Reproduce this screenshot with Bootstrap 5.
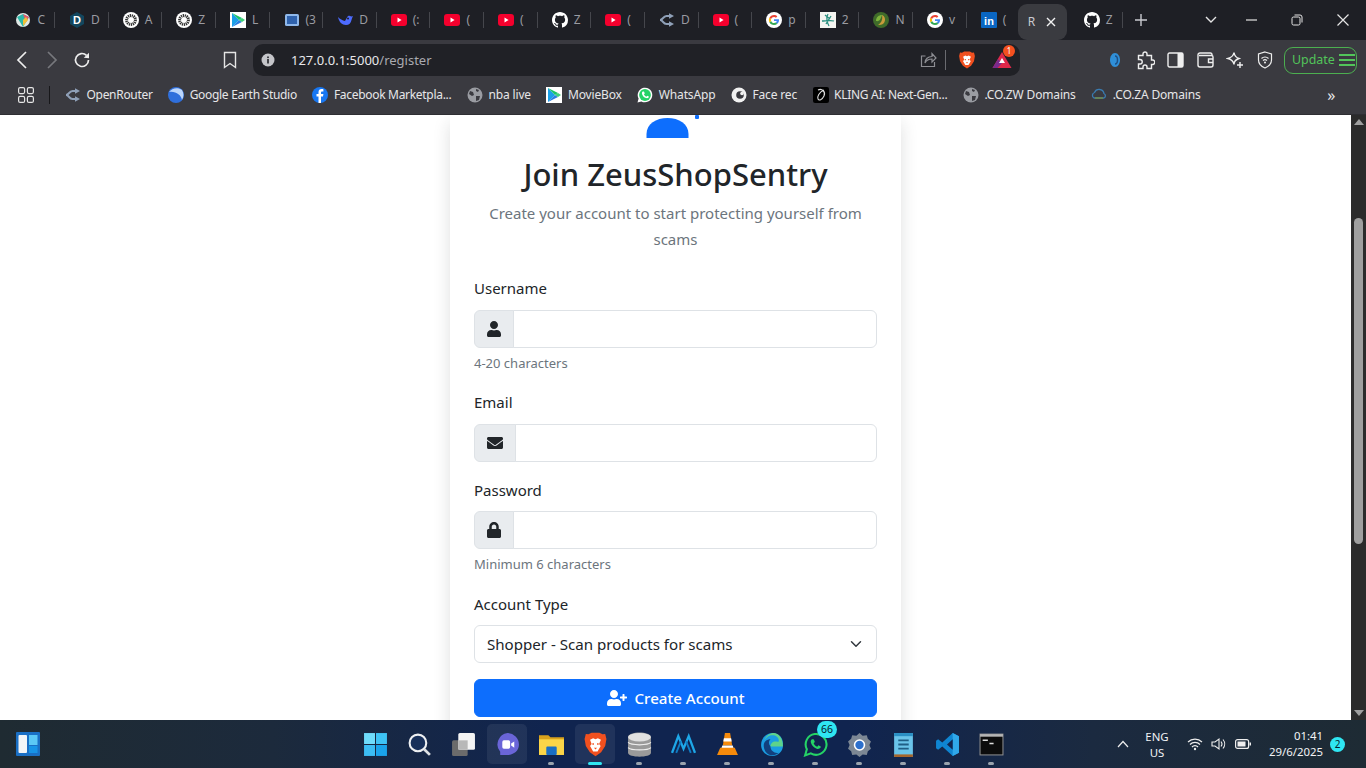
<!DOCTYPE html>
<html>
<head>
<title>Register - ZeusShopSentry</title>
<link rel="stylesheet" href="https://cdn.jsdelivr.net/npm/bootstrap@5.3.0/dist/css/bootstrap.min.css">
<style>
html, body { height: 100%; overflow: hidden; }
body { font-family: "Noto Sans", "Open Sans", sans-serif; background: #fff; }
.screen { height: 768px; width: 1366px; }

/* tab strip */
.tabstrip { height: 40px; background: #1e1f25; color: #9a9ba1; font-size: 12px; padding-left: 1.4px; }
.tb { width: 53.64px; height: 40px; flex: none; padding-left: 14px; position: relative; }
.tb .ltr { margin-left: 6px; white-space: nowrap; line-height: 1; }
.tb::after { content: ""; position: absolute; right: 0; top: 12px; height: 16px; width: 1px; background: #45464c; }
.tb.nosep::after { display: none; }
.tb-active { width: 49px; height: 36px; margin: 4px 3px 0 -2.6px; background: #3a3b40; border-radius: 9px; flex: none; padding-left: 10px; color: #c9cad0; }
.tb-active svg { margin-right: 11px; }
.tabstrip svg.fav { width: 16px; height: 16px; flex: none; }
.newtab { margin-left: 12px; }
.winbtn { width: 46px; flex: none; }
.winbtn-first { padding-left: 12px; }

/* toolbar */
.toolbar { height: 40px; background: #3a3a40; padding-left: 7px; }
.slot { width: 30px; height: 30px; flex: none; }
.slot-mark { margin-left: 118px; }
.urlbar { width: 767px; height: 32px; background: #202126; border-radius: 10px; margin-left: 8px; margin-right: 80px; flex: none; font-size: 13px; padding-left: 8px; }
.urlbar .host { color: #e8e8ea; }
.urlbar .path { color: #a9aab0; }
.url-text { margin-left: 16px; padding-top: 1px; }
.urlbar-sep { width: 1px; height: 20px; background: #6a6b70; }
.bat-count { top: -6px; left: 11px; width: 12px; height: 12px; background: #f4501f; color: #fff; font-size: 8px; line-height: 12px; }
.upd { width: 73px; height: 27px; border: 1px solid #4caf50; border-radius: 9px; color: #52c45a; font-size: 12.4px; margin-left: 4px; flex: none; padding-left: 7px; }

/* bookmarks */
.bookbar { height: 35px; background: #3a3a40; color: #e6e6e8; font-size: 12px; letter-spacing: -.3px; padding: 0 0 4px 18px; border-bottom: 1px solid #2e2e33; white-space: nowrap; }
.bk { gap: 5.5px; flex: none; margin-right: 15.5px; }
.bk-loose { letter-spacing: -.15px; }
.bk svg { width: 16px; height: 16px; flex: none; }
.bookbar-sep { width: 1px; height: 18px; background: #17171a; margin: 0 15px; flex: none; }
.bk-more { margin-left: auto; margin-right: 31px; font-size: 16px; }

/* page */
.viewport { height: 605px; overflow: hidden; background: #fff; }
.pagearea { width: 1351px; flex: none; }
.reg-card { width: 451px; height: 640px; border-radius: 0; color: #212529; }
.reg-card .card-body { padding: 0 24px; }
.logo-clip { height: 23px; margin-bottom: 17px; display: block; margin-left: auto; margin-right: auto; width: 80px; }
.reg-title { font-size: 31px; font-weight: 500; line-height: 38.4px; margin-bottom: 8px; }
.reg-sub { color: #6c757d; font-size: 15px; line-height: 25.6px; margin-bottom: 23.6px; }
.reg-label { font-size: 15px; line-height: 25.6px; margin-bottom: 8px; display: block; }
.reg-hint { font-size: 13px; color: #6c757d; margin-top: 4px; line-height: 22.4px; }
.reg-card .form-control, .reg-card .form-select { height: 38px; font-size: 15.1px; }
.reg-card .input-group-text { padding: 0 12px; background: #e9ecef; }
.fi { height: 16px; fill: #212529; display: block; }
.reg-btn { height: 38px; font-weight: 500; font-size: 15.1px; background: #0d6efd; padding: 0; }
.reg-btn svg { height: 16px; fill: #fff; }

/* scrollbar */
.vbar { width: 15px; flex: none; background: #2b2b2b; position: relative; }
.vthumb { position: absolute; left: 3px; right: 3px; top: 103px; height: 326px; background: #9f9f9f; border-radius: 5px; }
.varr { position: absolute; left: 3px; width: 0; height: 0; border-left: 5px solid transparent; border-right: 5px solid transparent; }
.varr.up { top: 4px; border-bottom: 6px solid #9f9f9f; }
.varr.dn { bottom: 4px; border-top: 6px solid #9f9f9f; }

/* taskbar */
.taskbar { height: 48px; background: linear-gradient(90deg, #1f2b32 0, #1c2a3c 20%, #10244f 40%, #10244f 62%, #1b2a40 80%, #1e2b34 100%); color: #f2f3f5; position: relative; padding-left: 353px; }
.tk { width: 44px; height: 48px; flex: none; position: relative; }
.tk svg { width: 25px; height: 25px; position: relative; }
.tk.on::before { content: ""; position: absolute; left: 2px; right: 2px; top: 4px; bottom: 4px; background: rgba(255,255,255,.07); border-radius: 5px; }
.tk.run::after { content: ""; position: absolute; left: 19px; bottom: 3px; width: 6px; height: 3px; border-radius: 2px; background: #9aa3ad; }
.tk.cur::after { left: 15px; width: 14px; background: #2fe6f2; }
.tk-badge { position: absolute; right: 0; top: 1px; min-width: 20px; height: 17px; padding: 0 3px; background: #2fe6f2; color: #07202b; border-radius: 9px; font-size: 10.5px; text-align: center; line-height: 17px; }
.widg { position: absolute; left: 16px; top: 12px; width: 24px; height: 24px; }
.tray { position: absolute; right: 0; top: 0; height: 48px; padding-right: 21px; font-size: 11.4px; }
.tray svg { flex: none; }
.tray-up { margin-right: 5px; }
.lang { width: 42px; line-height: 16px; text-align: center; margin: 2px 9px 0 2px; }
.clock { line-height: 16px; text-align: right; width: 70px; margin-left: 2px; }
.notif { width: 15px; height: 15px; border-radius: 50%; background: #2fe6f2; color: #07202b; font-size: 10px; line-height: 15px; text-align: center; margin-left: 7px; }
</style>
</head>
<body>
<svg width="0" height="0" class="d-block position-absolute">
  <defs>
    <symbol id="i-oai" viewBox="0 0 16 16"><circle cx="8" cy="8" r="8" fill="#fff"/><circle cx="8" cy="8" r="4.4" fill="none" stroke="#333" stroke-width="3" stroke-dasharray="1.2 .7"/><circle cx="8" cy="8" r="1.4" fill="#fff"/></symbol>
    <symbol id="i-yt" viewBox="0 0 16 16"><rect y="2" width="16" height="12" rx="3" fill="#f5002d"/><path d="M6.5 5.6 10.6 8l-4.1 2.4z" fill="#fff"/></symbol>
    <symbol id="i-gh" viewBox="0 0 16 16"><path fill="#fff" d="M8 0C3.58 0 0 3.58 0 8c0 3.54 2.29 6.53 5.47 7.59.4.07.55-.17.55-.38 0-.19-.01-.82-.01-1.49-2.01.37-2.53-.49-2.69-.94-.09-.23-.48-.94-.82-1.13-.28-.15-.68-.52-.01-.53.63-.01 1.08.58 1.23.82.72 1.21 1.87.87 2.33.66.07-.52.28-.87.51-1.07-1.78-.2-3.64-.89-3.64-3.95 0-.87.31-1.59.82-2.15-.08-.2-.36-1.02.08-2.12 0 0 .67-.21 2.2.82.64-.18 1.32-.27 2-.27.68 0 1.36.09 2 .27 1.53-1.04 2.2-.82 2.2-.82.44 1.1.16 1.92.08 2.12.51.56.82 1.27.82 2.15 0 3.07-1.87 3.75-3.65 3.95.29.25.54.73.54 1.48 0 1.07-.01 1.93-.01 2.2 0 .21.15.46.55.38A8.012 8.012 0 0 0 16 8c0-4.42-3.58-8-8-8z"/></symbol>
    <symbol id="i-goog" viewBox="0 0 16 16"><circle cx="8" cy="8" r="8" fill="#fff"/><path d="M13 8.2c0-.4 0-.7-.1-1H8v1.9h2.8c-.1.6-.5 1.2-1 1.5l1.6 1.2c.9-.9 1.6-2.1 1.6-3.6z" fill="#4285f4"/><path d="M8 13c1.4 0 2.5-.4 3.4-1.2l-1.6-1.2c-.5.3-1 .5-1.8.5-1.3 0-2.5-.9-2.9-2.1L3.4 10.2C4.2 11.9 6 13 8 13z" fill="#34a853"/><path d="M5.1 9c-.2-.6-.2-1.3 0-2L3.4 5.8c-.7 1.4-.7 3 0 4.4z" fill="#fbbc05"/><path d="M8 5c.8 0 1.4.3 1.9.8l1.4-1.4C10.5 3.5 9.3 3 8 3 6 3 4.2 4.1 3.4 5.8L5.1 7C5.5 5.8 6.7 5 8 5z" fill="#ea4335"/></symbol>
    <symbol id="i-play" viewBox="0 0 16 16"><rect width="16" height="16" fill="#fff"/><path d="M2 1 9 8 2 15z" fill="#1aa0e8"/><path d="M2 1l7 7 3-2z" fill="#1cc46a"/><path d="M2 15l7-7 3 2z" fill="#2a7de0"/><path d="M9 8l3-2 3 2-3 2z" fill="#3ed07a"/></symbol>
    <symbol id="i-or" viewBox="0 0 16 16"><path d="M1 8c3 0 3-4 6.5-4h3M1 8c3 0 3 4 6.5 4h3" fill="none" stroke="#8fa0b8" stroke-width="2.2"/><path d="M10 1.2 15 4l-5 2.8zM10 9.2l5 2.8-5 2.8z" fill="#8fa0b8"/></symbol>
    <symbol id="i-globe" viewBox="0 0 16 16"><circle cx="8" cy="8" r="7.5" fill="#9a9ca2"/><path d="M3 4l3 1 1 3-2 1-3-2zM9 2l3 1-1 2-2-1zM9 9l4 0-1 4-3 1z" fill="#3a3a40"/></symbol>
    <symbol id="i-wa" viewBox="0 0 16 16"><path d="M.5 15.5 1.6 11.6A7.3 7.3 0 1 1 4.4 14.4z" fill="#fff"/><circle cx="8" cy="8" r="5.9" fill="#25d366"/><path d="M5.7 4.6c-.6.5-1 1.4-.6 2.6.7 1.9 2 3.2 3.9 3.9 1.2.4 2.1 0 2.6-.6.3-.4.3-.9.2-1l-1.6-.8-.8 1c-1.1-.4-2-1.3-2.5-2.5l.9-.8-.7-1.7c-.1-.1-.8-.2-1.4-.1z" fill="#fff"/></symbol>
    <symbol id="i-moon" viewBox="0 0 16 16"><circle cx="8" cy="8" r="7.5" fill="#f1f1f1"/><circle cx="9" cy="8" r="3.8" fill="#3a3a40"/><circle cx="11" cy="6.5" r="1.8" fill="#f1f1f1"/></symbol>
    <symbol id="i-brave" viewBox="0 0 16 16"><path d="M3.5 1.5 5.5.5h5l2 1 1.7-.2.8 3.2-.8 4.5-2.6 4L8 15.5 4.4 13 1.8 9 1 4.5 1.8 1.3z" fill="#f1501f"/><path d="M4.5 5 6.5 4 8 4.6 9.5 4l2 1-1.2 2.6 1 1.4-2 3.4H6.5l-2-3.4 1-1.4z" fill="#fff"/><path d="M6 7.2h1v1H6zM9 7.2h1v1H9zM7 10h2l-1 1.2z" fill="#f1501f"/></symbol>
    <symbol id="i-lead" viewBox="0 0 16 16"><path d="M8 1c3 0 5 3.5 5 7s-2 7-5 7-5-3.5-5-7 2-7 5-7z" fill="#2f8fd8"/><path d="M8 4c1.5 0 2.5 2 2.5 4S9.5 12 8 12" fill="none" stroke="#1d4f86" stroke-width="1.5"/></symbol>
  </defs>
</svg>

<div class="screen d-flex flex-column">

  <!-- tabs -->
  <div class="tabstrip d-flex align-items-center">
    <div class="tb d-flex align-items-center"><svg class="fav" viewBox="0 0 16 16"><circle cx="8" cy="8" r="7" fill="#dfe8e6"/><path d="M2 5l6-3 6 3-6 10z" fill="#2db7a8"/><path d="M8 2l6 3-3 5z" fill="#e8556a"/><path d="M8 8l3-3 2 3-5 6z" fill="#f2c037"/></svg><span class="ltr">C</span></div>
    <div class="tb d-flex align-items-center"><svg class="fav" viewBox="0 0 16 16"><path d="M8 0l7 4v8l-7 4-7-4V4z" fill="#12465e"/><text x="8" y="12" font-size="11" font-weight="700" fill="#fff" text-anchor="middle" font-family="Liberation Sans">D</text></svg><span class="ltr">D</span></div>
    <div class="tb d-flex align-items-center"><svg class="fav"><use href="#i-oai"/></svg><span class="ltr">A</span></div>
    <div class="tb d-flex align-items-center"><svg class="fav"><use href="#i-oai"/></svg><span class="ltr">Z</span></div>
    <div class="tb d-flex align-items-center"><svg class="fav"><use href="#i-play"/></svg><span class="ltr">L</span></div>
    <div class="tb d-flex align-items-center"><svg class="fav" viewBox="0 0 16 16"><rect x="1" y="2" width="14" height="12" rx="1.5" fill="#8fb8ea"/><rect x="3" y="4" width="10" height="8" fill="#2f62ad"/></svg><span class="ltr">(3</span></div>
    <div class="tb d-flex align-items-center"><svg class="fav" viewBox="0 0 16 16"><path d="M1 5c1 5 4 8 8 8 3 0 5-2 5.5-5 .5-2 1-3 1.5-4-1 .5-2 .5-3 0-1-.5-2.5 0-3 1.5L8 9C5.5 8.5 3 7 1 5z" fill="#4d6bfe"/><circle cx="11" cy="6.5" r="1" fill="#1e1f25"/></svg><span class="ltr">D</span></div>
    <div class="tb d-flex align-items-center"><svg class="fav"><use href="#i-yt"/></svg><span class="ltr">(:</span></div>
    <div class="tb d-flex align-items-center"><svg class="fav"><use href="#i-yt"/></svg><span class="ltr">(</span></div>
    <div class="tb d-flex align-items-center"><svg class="fav"><use href="#i-yt"/></svg><span class="ltr">(</span></div>
    <div class="tb d-flex align-items-center"><svg class="fav"><use href="#i-gh"/></svg><span class="ltr">Z</span></div>
    <div class="tb d-flex align-items-center"><svg class="fav"><use href="#i-yt"/></svg><span class="ltr">(</span></div>
    <div class="tb d-flex align-items-center"><svg class="fav"><use href="#i-or"/></svg><span class="ltr">D</span></div>
    <div class="tb d-flex align-items-center"><svg class="fav"><use href="#i-yt"/></svg><span class="ltr">(</span></div>
    <div class="tb d-flex align-items-center"><svg class="fav"><use href="#i-goog"/></svg><span class="ltr">p</span></div>
    <div class="tb d-flex align-items-center"><svg class="fav" viewBox="0 0 16 16"><rect width="16" height="16" fill="#f4f4f0"/><path d="M2 9c3 0 9-1 12 0M8 2c-2 3-1 9 1 12M5 3l5 4M11 4 6 12" fill="none" stroke="#2a8f80" stroke-width="1.3"/></svg><span class="ltr">2</span></div>
    <div class="tb d-flex align-items-center"><svg class="fav" viewBox="0 0 16 16"><circle cx="8" cy="8" r="8" fill="#3f6b2a"/><path d="M3 9c0-4 3-6 6-6-1 3-2 7-6 6z" fill="#7db33c"/><path d="M9 3c3 1 4 5 2 8-2 2-4 2-6 2 3-2 5-5 4-10z" fill="#c99a3b"/></svg><span class="ltr">N</span></div>
    <div class="tb d-flex align-items-center"><svg class="fav"><use href="#i-goog"/></svg><span class="ltr">v</span></div>
    <div class="tb nosep d-flex align-items-center"><svg class="fav" viewBox="0 0 16 16"><rect width="16" height="16" rx="1" fill="#0a66c2"/><text x="8" y="12.5" font-size="11" font-weight="700" fill="#fff" text-anchor="middle" font-family="Liberation Sans">in</text></svg><span class="ltr">(</span></div>
    <div class="tb-active d-flex align-items-center"><span>R</span><svg class="ms-auto" width="10" height="10" viewBox="0 0 10 10"><path d="M1 1l8 8M9 1 1 9" stroke="#f2f2f2" stroke-width="1.4"/></svg></div>
    <div class="tb d-flex align-items-center"><svg class="fav"><use href="#i-gh"/></svg><span class="ltr">Z</span></div>
    <svg class="newtab" width="12" height="12" viewBox="0 0 12 12"><path d="M6 0v12M0 6h12" stroke="#c9cad0" stroke-width="1.4"/></svg>
    <div class="ms-auto d-flex align-items-center">
      <div class="winbtn winbtn-first d-flex justify-content-center"><svg width="12" height="8" viewBox="0 0 12 8"><path d="M1 1l5 5 5-5" fill="none" stroke="#e5e5e5" stroke-width="1.4"/></svg></div>
      <div class="winbtn d-flex justify-content-center"><svg width="11" height="2" viewBox="0 0 11 2"><path d="M0 1h11" stroke="#e5e5e5" stroke-width="1.2"/></svg></div>
      <div class="winbtn d-flex justify-content-center"><svg width="12" height="12" viewBox="0 0 12 12"><rect x="1" y="3" width="8" height="8" rx="1.5" fill="none" stroke="#e5e5e5"/><path d="M3.5 1H9a2 2 0 0 1 2 2v5.5" fill="none" stroke="#e5e5e5"/></svg></div>
      <div class="winbtn d-flex justify-content-center"><svg width="12" height="12" viewBox="0 0 12 12"><path d="M.5.5l11 11M11.5.5l-11 11" stroke="#e5e5e5" stroke-width="1.2"/></svg></div>
    </div>
  </div>

  <!-- toolbar -->
  <div class="toolbar d-flex align-items-center">
    <div class="slot d-flex align-items-center justify-content-center"><svg width="12" height="18" viewBox="0 0 12 18"><path d="M10 1 2 9l8 8" fill="none" stroke="#eee" stroke-width="1.7"/></svg></div>
    <div class="slot d-flex align-items-center justify-content-center"><svg width="12" height="18" viewBox="0 0 12 18"><path d="M2 1l8 8-8 8" fill="none" stroke="#77787d" stroke-width="1.7"/></svg></div>
    <div class="slot d-flex align-items-center justify-content-center"><svg width="18" height="18" viewBox="0 0 18 18"><path d="M15.5 9a6.5 6.5 0 1 1-2-4.7" fill="none" stroke="#eee" stroke-width="1.7"/><path d="M10.8 6.8 16 7.2V1.8z" fill="#eee"/></svg></div>
    <div class="slot slot-mark d-flex align-items-center justify-content-center"><svg width="14" height="18" viewBox="0 0 14 18"><path d="M1.5 1.5h11v15L7 12.5l-5.500 4z" fill="none" stroke="#e5e5e5" stroke-width="1.4"/></svg></div>
    <div class="urlbar d-flex align-items-center">
      <svg width="14" height="14" viewBox="0 0 14 14"><circle cx="7" cy="7" r="6.5" fill="#c4c5c9"/><rect x="6.2" y="6" width="1.6" height="4.5" fill="#202126"/><rect x="6.2" y="3.5" width="1.6" height="1.6" fill="#202126"/></svg>
      <span class="url-text"><span class="host">127.0.0.1:5000</span><span class="path">/register</span></span>
      <div class="ms-auto d-flex align-items-center">
        <svg width="18" height="18" viewBox="0 0 18 18"><path d="M15.5 11v4.5h-13V5h4" fill="none" stroke="#8d8e93" stroke-width="1.2"/><path d="M6 12c0-4 3-6.5 7-6.5V2.5L17 7l-4 4V8c-3 0-5.5 1-7 4z" fill="none" stroke="#8d8e93" stroke-width="1.2"/></svg>
        <span class="urlbar-sep d-block mx-2"></span>
        <svg width="18" height="20" class="ms-1"><use href="#i-brave"/></svg>
        <div class="position-relative ms-3 me-2">
          <svg width="20" height="18" viewBox="0 0 20 18" class="d-block"><path d="M10 1 19.5 17H.5z" fill="#e0284a"/><path d="M.5 17 6 8l4 4-4.5 5z" fill="#7a2a8c"/><path d="M10 7l3 5H7z" fill="#fff"/></svg>
          <span class="bat-count position-absolute rounded-circle text-center">1</span>
        </div>
      </div>
    </div>
    <div class="slot d-flex align-items-center justify-content-center"><svg width="16" height="18"><use href="#i-lead"/></svg></div>
    <div class="slot d-flex align-items-center justify-content-center"><svg width="19" height="19" viewBox="0 0 19 19"><path d="M7 3a2 2 0 0 1 4 0v1.5h4.5V9H17a2.3 2.3 0 0 1 0 4.5h-1.5v4H11V16a2 2 0 0 0-4 0v1.5H2.5V13H4a2.2 2.2 0 0 0 0-4.5H2.5v-4H7z" fill="none" stroke="#eee" stroke-width="1.4"/></svg></div>
    <div class="slot d-flex align-items-center justify-content-center"><svg width="17" height="16" viewBox="0 0 17 16"><rect x="1" y="1" width="15" height="14" rx="1.5" fill="none" stroke="#eee" stroke-width="1.4"/><rect x="10.5" y="1" width="5.5" height="14" fill="#eee"/></svg></div>
    <div class="slot d-flex align-items-center justify-content-center"><svg width="17" height="16" viewBox="0 0 17 16"><path d="M15 3.5V2.5A1.5 1.5 0 0 0 13.500 1H3A2 2 0 0 0 1 3v10a2 2 0 0 0 2 2h11a2 2 0 0 0 2-2V5a1.5 1.5 0 0 0-1.5-1.5H2" fill="none" stroke="#eee" stroke-width="1.4"/><path d="M16 7h-4.5v3.5H16" fill="none" stroke="#eee" stroke-width="1.4"/></svg></div>
    <div class="slot d-flex align-items-center justify-content-center"><svg width="18" height="18" viewBox="0 0 18 18"><path d="M8 1.5c.5 3 2 5 5 6-3 1-5 3-5 6-.5-3-2.5-5-6-6 3.5-1 5.5-3 6-6z" fill="none" stroke="#eee" stroke-width="1.4"/><path d="M14 11v6M11 14h6" stroke="#eee" stroke-width="1.4"/></svg></div>
    <div class="slot d-flex align-items-center justify-content-center"><svg width="16" height="18" viewBox="0 0 16 18"><path d="M8 1l6.5 2v6c0 4-3 6.5-6.5 8-3.5-1.500-6.5-4-6.5-8V3z" fill="none" stroke="#eee" stroke-width="1.2"/><path d="M4.5 7.5c2-1.800 5-1.800 7 0M6 9.500c1.200-1 2.800-1 4 0" fill="none" stroke="#eee" stroke-width="1.2"/><circle cx="8" cy="11.5" r="1" fill="#eee"/></svg></div>
    <div class="upd d-flex align-items-center"><span>Update</span><svg class="ms-1" width="16" height="14" viewBox="0 0 16 14"><path d="M0 2h16M0 7h16M0 12h16" stroke="#52c45a" stroke-width="1.8"/></svg></div>
  </div>

  <!-- bookmarks -->
  <div class="bookbar d-flex align-items-center">
    <svg width="16" height="16" viewBox="0 0 16 16"><g fill="none" stroke="#e5e5e5" stroke-width="1.2"><rect x=".6" y=".6" width="6" height="6" rx="1.5"/><rect x="9.4" y=".6" width="6" height="6" rx="1.5"/><rect x=".6" y="9.4" width="6" height="6" rx="1.5"/><rect x="9.4" y="9.4" width="6" height="6" rx="1.5"/></g></svg>
    <span class="bookbar-sep"></span>
    <div class="bk d-flex align-items-center"><svg><use href="#i-or"/></svg><span>OpenRouter</span></div>
    <div class="bk d-flex align-items-center"><svg viewBox="0 0 16 16"><circle cx="8" cy="8" r="8" fill="#2f6fdc"/><path d="M1 5c3-4 9-5 13-2 2 3 2 7 0 10C13 8 8 4 1 5z" fill="#bcd6fb"/></svg><span>Google Earth Studio</span></div>
    <div class="bk d-flex align-items-center"><svg viewBox="0 0 16 16"><circle cx="8" cy="8" r="8" fill="#1877f2"/><path d="M9 16V9.5h2l.4-2.5H9V5.6c0-.8.3-1.2 1.3-1.2h1.1V2.2C11 2.1 10.300 2 9.600 2 7.700 2 6.500 3.100 6.500 5.200V7H4.500v2.500h2V16z" fill="#fff"/></svg><span>Facebook Marketpla...</span></div>
    <div class="bk bk-loose d-flex align-items-center"><svg><use href="#i-globe"/></svg><span>nba live</span></div>
    <div class="bk bk-loose d-flex align-items-center"><svg><use href="#i-play"/></svg><span>MovieBox</span></div>
    <div class="bk bk-loose d-flex align-items-center"><svg><use href="#i-wa"/></svg><span>WhatsApp</span></div>
    <div class="bk bk-loose d-flex align-items-center"><svg><use href="#i-moon"/></svg><span>Face rec</span></div>
    <div class="bk d-flex align-items-center"><svg viewBox="0 0 16 16"><rect width="16" height="16" rx="2" fill="#000"/><path d="M5 3c4-2 8 2 6 6s-5 5-6 3 1-7 6-9" fill="none" stroke="#ddd" stroke-width="1.1"/></svg><span>KLING AI: Next-Gen...</span></div>
    <div class="bk bk-loose d-flex align-items-center"><svg><use href="#i-globe"/></svg><span>.CO.ZW Domains</span></div>
    <div class="bk bk-loose d-flex align-items-center"><svg viewBox="0 0 16 16"><path d="M3 11a3 3 0 0 1 .5-5.500A5 5 0 0 1 13 6.500 2.500 2.500 0 0 1 13 11z" fill="none" stroke="#3a7bb0" stroke-width="1.3"/><path d="M4 11h8" stroke="#7c8f3a" stroke-width="1.3"/></svg><span>.CO.ZA Domains</span></div>
    <span class="bk-more">&raquo;</span>
  </div>

  <!-- page -->
  <div class="viewport d-flex">
    <div class="pagearea d-flex justify-content-center">
      <div class="card reg-card border-0 shadow">
        <div class="card-body">
          <svg class="logo-clip" viewBox="0 0 80 23"><path d="M10.5 23v-4C10.5 9 20 3 31.5 3S52.5 9 52.5 19v4z" fill="#0d6efd"/><rect x="59" y="0" width="4" height="4" rx="1" fill="#0d6efd"/></svg>
          <h2 class="reg-title text-center">Join ZeusShopSentry</h2>
          <p class="reg-sub text-center">Create your account to start protecting yourself from scams</p>
          <form>
            <div class="mb-3">
              <label class="reg-label">Username</label>
              <div class="input-group">
                <span class="input-group-text"><svg class="fi" viewBox="0 0 448 512"><path d="M224 256c70.700 0 128-57.300 128-128S294.700 0 224 0 96 57.300 96 128s57.300 128 128 128zm89.600 32h-16.700c-22.200 10.200-46.900 16-72.900 16s-50.600-5.800-72.900-16h-16.700C60.200 288 0 348.200 0 422.400V464c0 26.500 21.500 48 48 48h352c26.500 0 48-21.500 48-48v-41.600c0-74.200-60.200-134.400-134.400-134.400z"/></svg></span>
                <input type="text" class="form-control">
              </div>
              <div class="reg-hint">4-20 characters</div>
            </div>
            <div class="mb-3">
              <label class="reg-label">Email</label>
              <div class="input-group">
                <span class="input-group-text"><svg class="fi" viewBox="0 0 512 512"><path d="M502.300 190.800c3.900-3.100 9.700-.2 9.700 4.700V400c0 26.500-21.500 48-48 48H48c-26.500 0-48-21.500-48-48V195.600c0-5 5.700-7.800 9.700-4.700 22.400 17.400 52.100 39.500 154.100 113.600 21.100 15.400 56.700 47.800 92.200 47.600 35.700.3 72-32.800 92.300-47.600 102-74.100 131.600-96.300 154-113.700zM256 320c23.200.4 56.600-29.200 73.400-41.400 132.700-96.300 142.800-104.700 173.400-128.700 5.800-4.500 9.200-11.500 9.200-18.900v-19c0-26.500-21.500-48-48-48H48C21.500 64 0 85.500 0 112v19c0 7.400 3.400 14.300 9.200 18.900 30.600 23.900 40.700 32.400 173.400 128.700 16.800 12.200 50.200 41.800 73.400 41.400z"/></svg></span>
                <input type="email" class="form-control">
              </div>
            </div>
            <div class="mb-3">
              <label class="reg-label">Password</label>
              <div class="input-group">
                <span class="input-group-text"><svg class="fi" viewBox="0 0 448 512"><path d="M400 224h-24v-72C376 68.200 307.800 0 224 0S72 68.200 72 152v72H48c-26.500 0-48 21.500-48 48v192c0 26.500 21.500 48 48 48h352c26.500 0 48-21.500 48-48V272c0-26.500-21.500-48-48-48zm-104 0H152v-72c0-39.700 32.300-72 72-72s72 32.300 72 72v72z"/></svg></span>
                <input type="password" class="form-control">
              </div>
              <div class="reg-hint">Minimum 6 characters</div>
            </div>
            <div class="mb-3">
              <label class="reg-label">Account Type</label>
              <select class="form-select"><option>Shopper - Scan products for scams</option></select>
            </div>
            <button type="button" class="btn btn-primary reg-btn w-100 d-flex align-items-center justify-content-center gap-2"><svg viewBox="0 0 640 512"><path d="M624 208h-64v-64c0-8.800-7.200-16-16-16h-32c-8.800 0-16 7.200-16 16v64h-64c-8.800 0-16 7.200-16 16v32c0 8.800 7.200 16 16 16h64v64c0 8.800 7.200 16 16 16h32c8.800 0 16-7.200 16-16v-64h64c8.800 0 16-7.200 16-16v-32c0-8.800-7.200-16-16-16zm-400 48c70.700 0 128-57.300 128-128S294.700 0 224 0 96 57.300 96 128s57.300 128 128 128zm89.600 32h-16.700c-22.200 10.200-46.900 16-72.900 16s-50.600-5.800-72.900-16h-16.700C60.200 288 0 348.200 0 422.400V464c0 26.500 21.500 48 48 48h352c26.500 0 48-21.500 48-48v-41.600c0-74.200-60.200-134.400-134.400-134.400z"/></svg>Create Account</button>
          </form>
        </div>
      </div>
    </div>
    <div class="vbar"><span class="varr up"></span><span class="vthumb"></span><span class="varr dn"></span></div>
  </div>

  <!-- taskbar -->
  <div class="taskbar d-flex">
    <svg class="widg" viewBox="0 0 24 24"><rect width="24" height="24" rx="1" fill="#1a6fc4"/><rect x="2.5" y="3" width="8.5" height="18" rx="1" fill="#f3f5f7"/><rect x="13" y="3" width="8.5" height="10" fill="#5cc8f5"/><rect x="13" y="14" width="8.5" height="7" fill="#1793e6"/></svg>
    <div class="tk d-flex align-items-center justify-content-center"><svg viewBox="0 0 24 24"><path d="M1 1h10.5v10.5H1z" fill="#6fdcfb"/><path d="M12.5 1H23v10.5H12.5z" fill="#3ec3f5"/><path d="M1 12.5h10.5V23H1z" fill="#3cbdf3"/><path d="M12.5 12.5H23V23H12.5z" fill="#1aa3ea"/></svg></div>
    <div class="tk d-flex align-items-center justify-content-center"><svg viewBox="0 0 24 24"><circle cx="10.5" cy="10.5" r="8" fill="#18305a" stroke="#eef0f2" stroke-width="2"/><path d="M16.5 16.5 22 22" stroke="#dfe2e5" stroke-width="2.6"/></svg></div>
    <div class="tk d-flex align-items-center justify-content-center"><svg viewBox="0 0 24 24"><rect x="1" y="8" width="15" height="15" rx="1.5" fill="#6b6b6b"/><rect x="7" y="1" width="16" height="16" rx="1.5" fill="#f4f4f4"/><rect x="7" y="8" width="9" height="9" fill="#b8b8b8"/></svg></div>
    <div class="tk on d-flex align-items-center justify-content-center"><svg viewBox="0 0 24 24"><path d="M12 1a11 11 0 0 1 11 11c0 6-5 10-11 10H5v-3A11 11 0 0 1 12 1z" fill="#6a65d8"/><rect x="7" y="8" width="7.5" height="8" rx="1.5" fill="#fff"/><path d="M15.5 11l3-2v6l-3-2z" fill="#fff"/></svg></div>
    <div class="tk run d-flex align-items-center justify-content-center"><svg viewBox="0 0 24 24"><path d="M0 3h9l2 2h13v17H0z" fill="#d9a21c"/><path d="M0 7h24v15H0z" fill="#fbd548"/><rect x="7" y="14" width="10" height="8" rx="1" fill="#1a6fc4"/></svg></div>
    <div class="tk on run cur d-flex align-items-center justify-content-center"><svg viewBox="0 0 16 16"><use href="#i-brave"/></svg></div>
    <div class="tk run d-flex align-items-center justify-content-center"><svg viewBox="0 0 24 24"><path d="M1 5c0-6 22-6 22 0v15c0 5-22 5-22 0z" fill="#9a9a9a"/><ellipse cx="12" cy="5" rx="11" ry="4" fill="#e0e0e0"/><path d="M1 10c3 3 19 3 22 0M1 15c3 3 19 3 22 0" fill="none" stroke="#eee" stroke-width="1.2"/></svg></div>
    <div class="tk run d-flex align-items-center justify-content-center"><svg viewBox="0 0 24 24"><path d="M1 20 7 4l5 12 5-12 6 16" fill="none" stroke="#1ea7e8" stroke-width="2.2"/><path d="M5 20 9.5 9M19 20 14.5 9" fill="none" stroke="#0f7cc4" stroke-width="1.8"/></svg></div>
    <div class="tk run d-flex align-items-center justify-content-center"><svg viewBox="0 0 24 24"><path d="M9.5 1h5l2 12H7.5z" fill="#f58a0b"/><path d="M8.5 6h7l.5 3H8z" fill="#fff"/><path d="M7 13h10l1 3H6z" fill="#fff"/><path d="M5 15h14l3 7H2z" fill="#f58a0b"/></svg></div>
    <div class="tk run d-flex align-items-center justify-content-center"><svg viewBox="0 0 24 24"><path d="M23 13c0 6-5 10-10 10-7 0-11-5-11-10.500C2 6 7 1 13 1c6 0 10 5 10 10z" fill="#1b9de2"/><path d="M23 14H11c0-3 2-5 5-5s3 1 3-1C19 5 16 3 13 3 9 3 7 5 5 8c2-5 6-7 9-7 5 0 9 5 9 13z" fill="#5fd38a"/><path d="M11 14c0 4 4 7 8 6-4 4-12 3-14-4s3-9 6-9c-2 2-2 4 0 7z" fill="#12407e"/></svg></div>
    <div class="tk run d-flex align-items-center justify-content-center"><svg viewBox="0 0 24 24"><path d="M2 22.5 3.7 16.5A10 10 0 1 1 7.5 20.5z" fill="none" stroke="#25d366" stroke-width="2"/><path d="M8.5 7c-.9.8-1.4 2-.8 3.6 1 2.6 2.8 4.4 5.4 5.4 1.6.6 2.8 0 3.6-.8.4-.5.4-1.2.3-1.4l-2.2-1.100-1.100 1.400c-1.500-.6-2.800-1.800-3.500-3.400l1.200-1.100-1-2.400c-.1-.1-1.100-.3-1.900-.2z" fill="#25d366"/></svg><span class="tk-badge">66</span></div>
    <div class="tk run d-flex align-items-center justify-content-center"><svg viewBox="0 0 24 24"><path d="M12 1l3 2.5 4-.5 1 3.5 3 2.5-1.5 3.5L23 16l-3 2.5-1 3.5-4-.5L12 24l-3-2.5-4 .5-1-3.500L1 16l1.500-3.500L1 9l3-2.500L5 3l4 .5z" fill="#7c8794"/><circle cx="12" cy="12.5" r="5.5" fill="#fff"/><circle cx="12" cy="12.5" r="4" fill="#2c6fcc"/></svg></div>
    <div class="tk run d-flex align-items-center justify-content-center"><svg viewBox="0 0 24 24"><rect x="3" y="1" width="18" height="23" fill="#6ac4ea"/><rect x="3" y="1" width="18" height="3" fill="#2a8fc4"/><rect x="3" y="21.5" width="18" height="2.5" fill="#a5652b"/><path d="M7 8h10M7 12h10M7 16h10" stroke="#1f5f86" stroke-width="1.8"/></svg></div>
    <div class="tk run d-flex align-items-center justify-content-center"><svg viewBox="0 0 24 24"><path d="M17 1 23 4v16l-6 3L7 14l-4 3-2-1.500v-7L3 7l4 3z" fill="#0f85d1"/><path d="M17 1 23 4v16l-6 3z" fill="#30a8ea"/><path d="M17 7l-5.500 5L17 17z" fill="#10244f"/></svg></div>
    <div class="tk run d-flex align-items-center justify-content-center"><svg viewBox="0 0 24 24"><rect x="1" y="2" width="22" height="20" fill="#0c0c0c" stroke="#8e8e8e"/><rect x="1" y="2" width="22" height="2.5" fill="#b5b5b5"/><path d="M3.5 8h5M10 11h4" stroke="#ddd" stroke-width="1.4"/></svg></div>

    <div class="tray d-flex align-items-center">
      <svg class="tray-up" width="12" height="8" viewBox="0 0 12 8"><path d="M1 7l5-5.500L11 7" fill="none" stroke="#eee" stroke-width="1.2"/></svg>
      <div class="lang">ENG<br>US</div>
      <svg width="16" height="14" viewBox="0 0 16 14" class="me-2"><path d="M1 5a10 10 0 0 1 14 0M3 7.500a7 7 0 0 1 10 0M5 10a4 4 0 0 1 6 0" fill="none" stroke="#eee" stroke-width="1.2"/><circle cx="8" cy="12" r="1.2" fill="#eee"/></svg>
      <svg width="16" height="16" viewBox="0 0 16 16" class="me-2"><path d="M1 6v4h3l4 3V3L4 6z" fill="none" stroke="#eee" stroke-width="1.1"/><path d="M10 5.500a4 4 0 0 1 0 5M12 3.500a7 7 0 0 1 0 9" fill="none" stroke="#eee" stroke-width="1.1"/></svg>
      <svg width="16" height="10" viewBox="0 0 16 10"><rect x=".6" y=".6" width="13" height="8.8" rx="2" fill="none" stroke="#eee" stroke-width="1.2"/><rect x="2.5" y="2.5" width="8" height="5" fill="#eee"/><rect x="14.5" y="3.5" width="1.5" height="3" fill="#eee"/></svg>
      <div class="clock">01:41<br>29/6/2025</div>
      <div class="notif">2</div>
    </div>
  </div>
</div>
</body>
</html>
